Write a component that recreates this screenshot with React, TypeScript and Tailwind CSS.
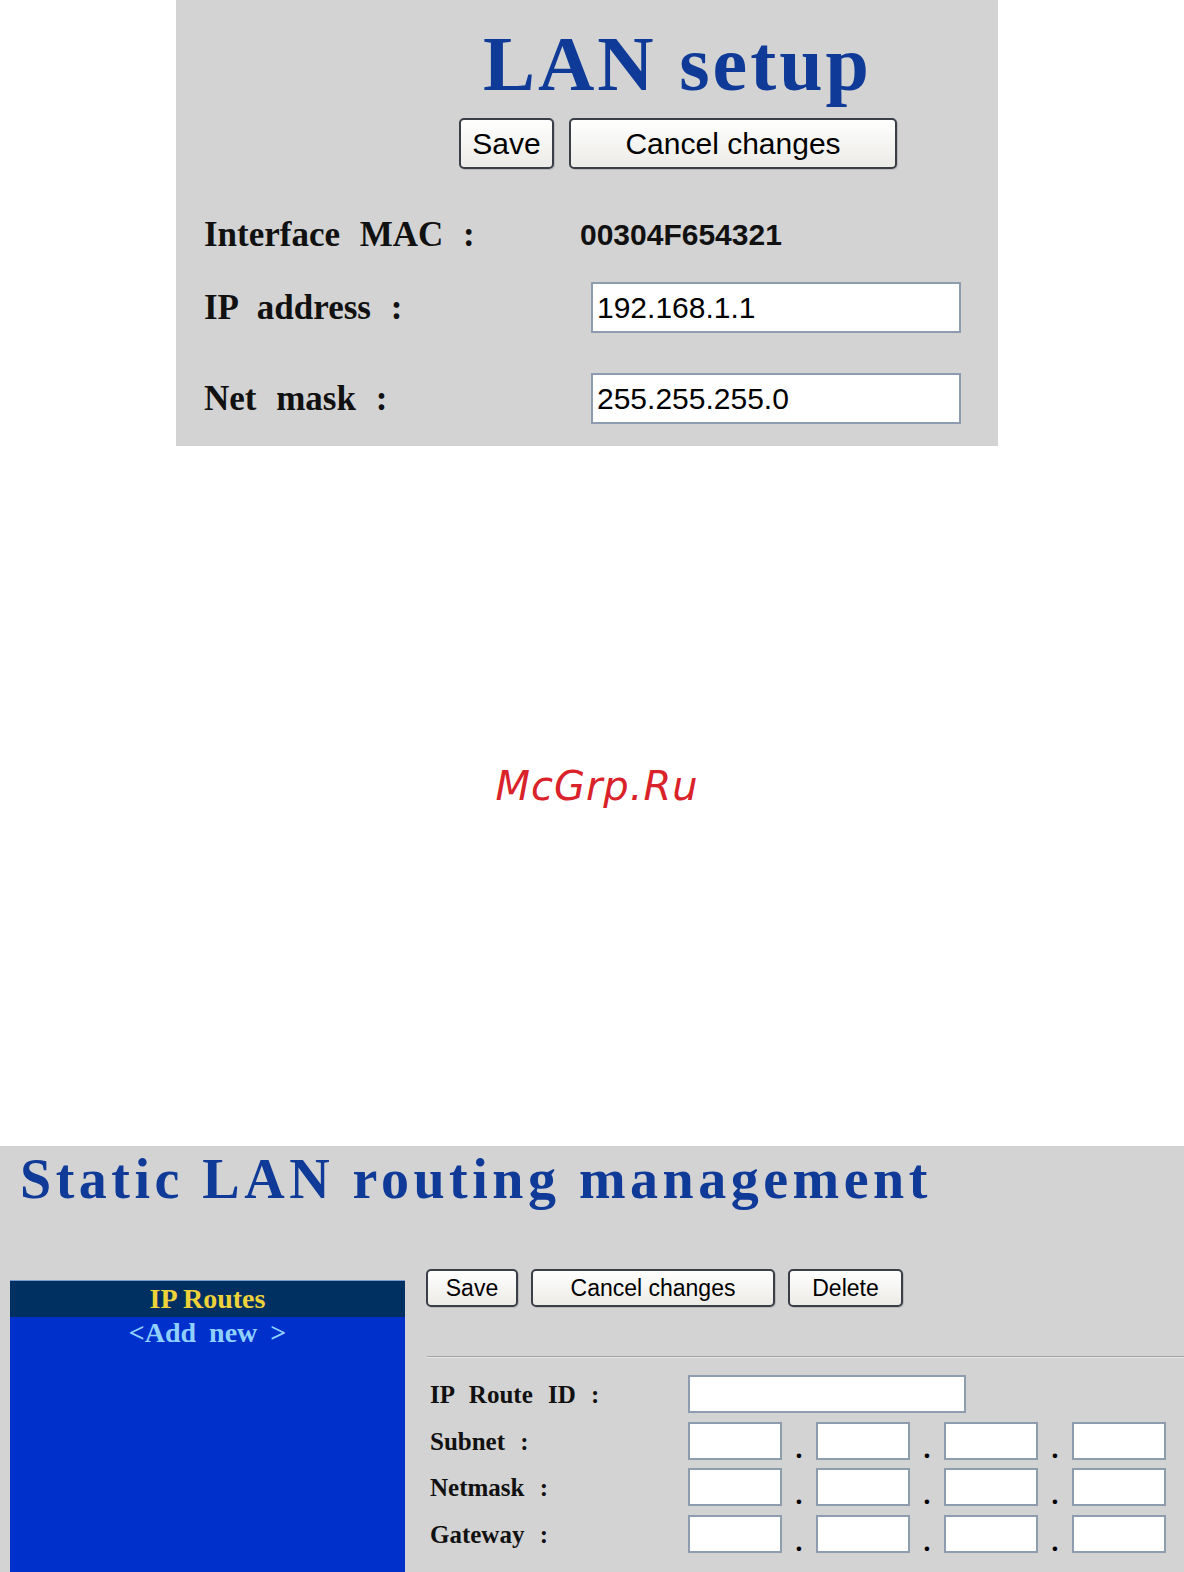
import type { ReactNode } from "react";

const serif = "font-['Liberation_Serif','Times_New_Roman',serif]";
const sans = "font-['Liberation_Sans',Arial,sans-serif]";

function Btn({ children, className }: { children: ReactNode; className: string }) {
  return (
    <button
      type="button"
      className={`${sans} ${className} rounded-[5px] border-2 border-[#3a3f47] bg-gradient-to-b from-white to-[#ecebe6] text-black shadow-[1px_1px_0_#b8b8b8] flex items-center justify-center`}
    >
      {children}
    </button>
  );
}

function Field({ value, className }: { value?: string; className: string }) {
  return (
    <input
      readOnly
      value={value ?? ""}
      className={`${sans} ${className} bg-white border-2 border-[#8d9cae] px-[4px] text-black outline-none`}
    />
  );
}

function LanSetup() {
  const label = `${serif} font-bold text-[35px] leading-[35px] [word-spacing:11px] text-[#111]`;
  return (
    <div className="ml-[176px] w-[822px] h-[446px] bg-[#d3d3d3] pt-[25px]">
      <h1
        className={`${serif} ml-[307px] font-bold text-[78px] leading-[78px] tracking-[3px] text-[#0f3a98]`}
      >
        LAN setup
      </h1>
      <div className="ml-[283px] mt-[15px] flex gap-[15px]">
        <Btn className="w-[95px] h-[51px] text-[30px]">Save</Btn>
        <Btn className="w-[328px] h-[51px] text-[30px]">Cancel changes</Btn>
      </div>

      <div className="mt-[40px] h-[51px] pl-[28px] flex items-center">
        <div className={`${label} w-[376px]`}>Interface MAC :</div>
        <div className={`${sans} font-bold text-[30px] text-[#111]`}>00304F654321</div>
      </div>
      <div className="mt-[22px] h-[51px] pl-[28px] flex items-center">
        <div className={`${label} w-[387px]`}>IP address :</div>
        <Field value="192.168.1.1" className="w-[370px] h-[51px] text-[30px]" />
      </div>
      <div className="mt-[40px] h-[51px] pl-[28px] flex items-center">
        <div className={`${label} w-[387px]`}>Net mask :</div>
        <Field value="255.255.255.0" className="w-[370px] h-[51px] text-[30px]" />
      </div>
    </div>
  );
}

function Watermark() {
  return (
    <div className="mt-[320px] h-[40px] flex justify-center">
      <span className="font-['DejaVu_Sans',sans-serif] italic text-[40px] leading-[40px] tracking-[1px] text-[#d9222a] ml-[10px]">
        McGrp.Ru
      </span>
    </div>
  );
}

function OctetRow({ title }: { title: string }) {
  const label = `${serif} font-bold text-[25px] leading-[25px] [word-spacing:9px] text-[#111]`;
  return (
    <div className="h-[38px] pl-[4px] flex items-center">
      <div className={`${label} w-[258px]`}>{title}</div>
      {[0, 1, 2, 3].map((i) => (
        <div key={i} className="flex items-end h-[38px]">
          <Field className="w-[94px] h-[38px] text-[22px]" />
          {i < 3 && (
            <span className="w-[34px] text-center text-[26px] leading-[24px] font-bold text-black">.</span>
          )}
        </div>
      ))}
    </div>
  );
}

function StaticRouting() {
  const label = `${serif} font-bold text-[25px] leading-[25px] [word-spacing:9px] text-[#111]`;
  return (
    <div className="mt-[340px] w-[1184px] h-[426px] bg-[#d3d3d3] overflow-hidden pt-[5px]">
      <h1
        className={`${serif} pl-[20px] font-bold text-[56px] leading-[56px] tracking-[4.5px] text-[#0f3a98] whitespace-nowrap`}
      >
        Static LAN routing management
      </h1>
      <div className="mt-[62px] flex items-start">
        <div className="ml-[10px] mt-[11px] w-[395px] h-[400px] bg-[#0030cc] border-t border-[#7a9ccc]">
          <div
            className={`${serif} h-[36px] bg-[#003062] text-center font-bold text-[28px] leading-[36px] text-[#eed23a]`}
          >
            IP Routes
          </div>
          <div
            className={`${serif} text-center font-bold text-[28px] leading-[32px] [word-spacing:6px] text-[#8fd0ff]`}
          >
            &lt;Add new &gt;
          </div>
        </div>

        <div className="ml-[21px] flex-1">
          <div className="flex gap-[13px]">
            <Btn className="w-[92px] h-[38px] text-[23px]">Save</Btn>
            <Btn className="w-[244px] h-[38px] text-[23px]">Cancel changes</Btn>
            <Btn className="w-[115px] h-[38px] text-[23px]">Delete</Btn>
          </div>
          <div className="mt-[49px] ml-[1px] h-[2px] border-t border-[#a4a4a4] border-b border-b-[#e6e6e6]" />
          <div className="mt-[17px] h-[38px] pl-[4px] flex items-center">
            <div className={`${label} w-[258px]`}>IP Route ID :</div>
            <Field className="w-[278px] h-[38px] text-[22px]" />
          </div>
          <div className="mt-[9px]">
            <OctetRow title="Subnet :" />
          </div>
          <div className="mt-[8px]">
            <OctetRow title="Netmask :" />
          </div>
          <div className="mt-[9px]">
            <OctetRow title="Gateway :" />
          </div>
        </div>
      </div>
    </div>
  );
}

export default function App() {
  return (
    <div className="w-[1184px] h-[1572px] bg-white overflow-hidden">
      <LanSetup />
      <Watermark />
      <StaticRouting />
    </div>
  );
}
